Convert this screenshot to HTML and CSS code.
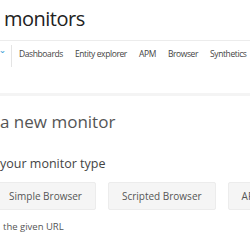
FILE: index.html
```html
<!DOCTYPE html>
<html lang="en">
<head>
  <meta charset="UTF-8">
  <title>Synthetics - New monitor</title>
  <link rel="stylesheet" href="styles.css">
</head>
<body>
  <!-- Page title -->
  <div class="page-title">monitors</div>

  <!-- Nav bar -->
  <div class="navbar">
    <div class="caret">&#711;</div>
    <div class="nav-links">
      <a href="#">Dashboards</a>
      <a href="#">Entity explorer</a>
      <a href="#">APM</a>
      <a href="#">Browser</a>
      <a href="#">Synthetics</a>
    </div>
  </div>

  <!-- Main Content -->
  <div class="content">
    <h1>a new monitor</h1>
    <h2>your monitor type</h2>
    <div class="types">
      <div class="type-btn first">Simple Browser</div>
      <div class="type-btn">Scripted Browser</div>
      <div class="type-btn">API test</div>
    </div>
    <p class="hint">the given URL</p>
  </div>
</body>
</html>
```

FILE: styles.css
```css
body {
  margin: 0;
  font-family: 'Open Sans', sans-serif;
  background: #fff;
  color: #333;
  width: 250px;
  height: 250px;
  overflow: hidden;
}

.page-title {
  font-size: 20px;
  letter-spacing: -0.5px;
  color: #222;
  padding: 5px 0 0 4px;
  height: 35px;
}

/* Nav bar */
.navbar {
  display: flex;
  align-items: flex-start;
  border-top: 1px solid #ececec;
  border-bottom: 3px solid #f4f4f4;
  height: 52px;
}

.caret {
  width: 11px;
  color: #4aa3d8;
  font-size: 12px;
  line-height: 1;
  padding-top: 6px;
  border-right: 1px solid #e4e4e4;
  height: 16px;
  margin-top: 4px;
}

.nav-links {
  display: flex;
  gap: 12px;
  padding: 7px 0 0 7px;
  white-space: nowrap;
}

.nav-links a {
  color: #444;
  font-size: 8.5px;
  letter-spacing: -0.4px;
  text-decoration: none;
}

/* Content */
.content {
  white-space: nowrap;
}

.content h1 {
  font-weight: normal;
  font-size: 17px;
  color: #555;
  margin: 14px 0 0 0;
}

.content h2 {
  font-weight: normal;
  font-size: 12.5px;
  color: #444;
  margin: 22px 0 0 0;
}

.types {
  display: flex;
  gap: 12px;
  margin-top: 10px;
}

.type-btn {
  background: #f5f5f5;
  border: 1px solid #ececec;
  border-radius: 2px;
  color: #555;
  font-size: 10px;
  padding: 0 13px;
  height: 26px;
  line-height: 26px;
  flex-shrink: 0;
}

.type-btn.first {
  margin-left: -5px;
}

.hint {
  font-size: 9.5px;
  color: #555;
  margin: 10px 0 0 3px;
}
```
